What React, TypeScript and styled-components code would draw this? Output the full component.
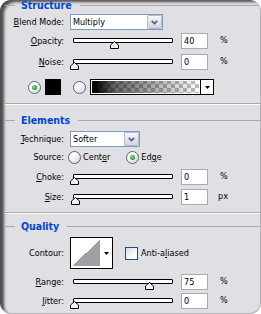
import React from "react";
import styled, { createGlobalStyle } from "styled-components";

const GlobalStyle = createGlobalStyle`
  html, body { margin: 0; padding: 0; background: #ffffff; }
  body {
    font-family: "DejaVu Sans Condensed", "DejaVu Sans", "Liberation Sans", sans-serif;
    font-size: 9px;
    color: #000;
  }
`;

const Frame = styled.div`
  width: 261px;
  height: 314px;
  box-sizing: border-box;
  background: #e0dfe3;
  border-radius: 11px;
  border-right: 1px solid #b3b2b7;
  border-bottom: 1px solid #b3b2b7;
  box-shadow: inset 5px 3px 3px -1px rgba(40, 40, 40, 0.8);
  overflow: hidden;
`;

const GroupHeader = styled.div<{ $top: number }>`
  display: flex;
  align-items: center;
  height: 12px;
  margin-top: ${(p) => p.$top}px;
  padding-left: 5px;
  &::before {
    content: "";
    width: 10px;
    height: 1px;
    background: #a9a8ae;
  }
  &::after {
    content: "";
    flex: 1;
    height: 1px;
    background: #a9a8ae;
  }
`;

const GroupTitle = styled.span`
  font-weight: bold;
  font-size: 10.5px;
  line-height: 12px;
  color: #0046d5;
  margin: 0 8px 0 6px;
  white-space: nowrap;
`;

const Separator = styled.div<{ $top: number }>`
  margin-top: ${(p) => p.$top}px;
  margin-left: 5px;
  height: 0;
  border-top: 1px solid #a9a8ae;
  border-bottom: 1px solid #ffffff;
`;

const Row = styled.div<{ $top: number; $height?: number; $indent?: number }>`
  display: flex;
  align-items: center;
  height: ${(p) => p.$height ?? 16}px;
  margin-top: ${(p) => p.$top}px;
  padding-left: ${(p) => p.$indent ?? 0}px;
`;

const Label = styled.span`
  width: 64px;
  flex-shrink: 0;
  text-align: right;
  white-space: nowrap;
  line-height: 12px;
`;

const Key = styled.u`
  text-decoration: underline;
  text-underline-offset: 1px;
`;

const SelectBox = styled.div<{ $width: number }>`
  width: ${(p) => p.$width}px;
  height: 16px;
  box-sizing: border-box;
  margin-left: 6px;
  flex-shrink: 0;
  border: 1px solid #7f9db9;
  background: #ffffff;
  display: flex;
  align-items: center;
`;

const SelectValue = styled.span`
  flex: 1;
  padding-left: 2px;
  line-height: 12px;
  white-space: nowrap;
`;

const SelectButton = styled.span`
  width: 15px;
  height: 14px;
  box-sizing: border-box;
  border: 1px solid #b6bacb;
  border-radius: 1px;
  background: linear-gradient(#f6f7fb, #cfd3e2);
  display: flex;
  align-items: center;
  justify-content: center;
`;

const SliderBox = styled.div`
  position: relative;
  width: 100px;
  height: 16px;
  margin-left: 9px;
  flex-shrink: 0;
`;

const Track = styled.div`
  margin-top: 5px;
  height: 5px;
  box-sizing: border-box;
  border: 1px solid #000000;
  border-radius: 1px;
  background: #ffffff;
`;

const ThumbIcon = styled.svg`
  position: absolute;
  top: 8px;
  display: block;
`;

const NumberField = styled.div`
  width: 27px;
  height: 16px;
  box-sizing: border-box;
  margin-left: 8px;
  flex-shrink: 0;
  border: 1px solid #a5acb5;
  background: #ffffff;
  padding-left: 2px;
  display: flex;
  align-items: center;
  line-height: 12px;
`;

const Unit = styled.span<{ $gap: number }>`
  margin-left: ${(p) => p.$gap}px;
  align-self: flex-start;
  margin-top: 1px;
  line-height: 12px;
`;

const RadioDot = styled.span<{ $checked?: boolean; $gap?: number }>`
  width: 13px;
  height: 13px;
  box-sizing: border-box;
  flex-shrink: 0;
  margin-left: ${(p) => p.$gap ?? 0}px;
  border-radius: 50%;
  border: 1px solid #4f6487;
  background: linear-gradient(135deg, #ffffff 35%, #d2d2da);
  display: flex;
  align-items: center;
  justify-content: center;
  &::after {
    content: "";
    display: ${(p) => (p.$checked ? "block" : "none")};
    width: 5px;
    height: 5px;
    border-radius: 50%;
    background: radial-gradient(circle at 40% 40%, #8fe08f, #1e9e1e 70%);
  }
`;

const Option = styled.span<{ $gap: number }>`
  display: flex;
  align-items: center;
  margin-left: ${(p) => p.$gap}px;
`;

const OptionText = styled.span`
  margin-left: 2px;
  line-height: 12px;
  white-space: nowrap;
`;

const Swatch = styled.span`
  width: 16px;
  height: 16px;
  margin-left: 4px;
  background: #000000;
  flex-shrink: 0;
`;

const GradientBox = styled.div`
  width: 124px;
  height: 16px;
  box-sizing: border-box;
  margin-left: 4px;
  border: 1px solid #000000;
  display: flex;
  flex-shrink: 0;
`;

const GradientFill = styled.div`
  flex: 1;
  box-shadow: inset 0 0 0 1px #ffffff;
  background:
    linear-gradient(to right, #000000 4%, rgba(0, 0, 0, 0.6) 22%, rgba(0, 0, 0, 0) 100%),
    repeating-conic-gradient(#bfbfbf 0% 25%, #ffffff 0% 50%) 0 0 / 8px 8px;
`;

const ArrowArea = styled.div<{ $width: number; $divider?: boolean }>`
  width: ${(p) => p.$width}px;
  border-left: ${(p) => (p.$divider ? "1px solid #000" : "none")};
  background: #ffffff;
  display: flex;
  align-items: center;
  justify-content: center;
`;

const ContourBox = styled.div`
  width: 43px;
  height: 32px;
  box-sizing: border-box;
  margin-left: 6px;
  flex-shrink: 0;
  border: 1px solid #000000;
  background: #ffffff;
  padding: 2px 0 2px 1px;
  display: flex;
`;

const ContourPreview = styled.div`
  width: 28px;
  height: 100%;
  background: linear-gradient(to bottom right, #ffffff 50%, #a09fa5 50%);
`;

const CheckBox = styled.span`
  width: 13px;
  height: 13px;
  box-sizing: border-box;
  margin-left: 12px;
  flex-shrink: 0;
  border: 1px solid #1c5180;
  background: linear-gradient(135deg, #dcdce2, #ffffff 75%);
`;

const CheckText = styled.span`
  margin-left: 3px;
  line-height: 12px;
  white-space: nowrap;
`;

const Chevron = () => (
  <svg width="7" height="5" viewBox="0 0 7 5">
    <path d="M0.8 0.8 L3.5 3.6 L6.2 0.8" fill="none" stroke="#4d6185" strokeWidth="1.7" />
  </svg>
);

const DownTriangle = () => (
  <svg width="5" height="3" viewBox="0 0 5 3">
    <path d="M0 0 H5 L2.5 3 Z" fill="#000" />
  </svg>
);

const Slider = ({ value }: { value: number }) => (
  <SliderBox>
    <Track />
    <ThumbIcon width="9" height="8" viewBox="0 0 9 8" style={{ left: value - 3 }}>
      <path d="M4.5 0.5 L8.5 4 L8.5 7.5 L0.5 7.5 L0.5 4 Z" fill="#f2f2f2" stroke="#000" strokeWidth="1" />
    </ThumbIcon>
  </SliderBox>
);

const SliderRow = ({
  top,
  label,
  value,
  unit = "%",
  unitGap = 12,
}: {
  top: number;
  label: React.ReactNode;
  value: number;
  unit?: string;
  unitGap?: number;
}) => (
  <Row $top={top}>
    <Label>{label}</Label>
    <Slider value={value} />
    <NumberField>{value}</NumberField>
    <Unit $gap={unitGap}>{unit}</Unit>
  </Row>
);

export default function App() {
  return (
    <>
      <GlobalStyle />
      <Frame>
        <GroupHeader $top={-1}>
          <GroupTitle>Structure</GroupTitle>
        </GroupHeader>
        <Row $top={3}>
          <Label>
            <Key>B</Key>lend Mode:
          </Label>
          <SelectBox $width={93}>
            <SelectValue>Multiply</SelectValue>
            <SelectButton>
              <Chevron />
            </SelectButton>
          </SelectBox>
        </Row>
        <SliderRow top={3} label={<><Key>O</Key>pacity:</>} value={40} />
        <SliderRow top={5} label={<><Key>N</Key>oise:</>} value={0} />
        <Row $top={9} $indent={28}>
          <RadioDot $checked />
          <Swatch />
          <RadioDot $gap={12} />
          <GradientBox>
            <GradientFill />
            <ArrowArea $width={12} $divider>
              <DownTriangle />
            </ArrowArea>
          </GradientBox>
        </Row>
        <Separator $top={8} />

        <GroupHeader $top={9}>
          <GroupTitle>Elements</GroupTitle>
        </GroupHeader>
        <Row $top={5}>
          <Label>
            <Key>T</Key>echnique:
          </Label>
          <SelectBox $width={70}>
            <SelectValue>Softer</SelectValue>
            <SelectButton>
              <Chevron />
            </SelectButton>
          </SelectBox>
        </Row>
        <Row $top={2}>
          <Label>Source:</Label>
          <Option $gap={4}>
            <RadioDot />
            <OptionText>
              Cent<Key>e</Key>r
            </OptionText>
          </Option>
          <Option $gap={16}>
            <RadioDot $checked />
            <OptionText>
              Ed<Key>g</Key>e
            </OptionText>
          </Option>
        </Row>
        <SliderRow top={4} label={<><Key>C</Key>hoke:</>} value={0} />
        <SliderRow top={4} label={<><Key>S</Key>ize:</>} value={1} unit="px" unitGap={10} />
        <Separator $top={7} />

        <GroupHeader $top={6}>
          <GroupTitle>Quality</GroupTitle>
        </GroupHeader>
        <Row $top={5} $height={32}>
          <Label>Contour:</Label>
          <ContourBox>
            <ContourPreview />
            <ArrowArea $width={12}>
              <DownTriangle />
            </ArrowArea>
          </ContourBox>
          <CheckBox />
          <CheckText>
            Anti-a<Key>l</Key>iased
          </CheckText>
        </Row>
        <SliderRow top={5} label={<><Key>R</Key>ange:</>} value={75} />
        <SliderRow top={3} label={<><Key>J</Key>itter:</>} value={0} />
      </Frame>
    </>
  );
}
